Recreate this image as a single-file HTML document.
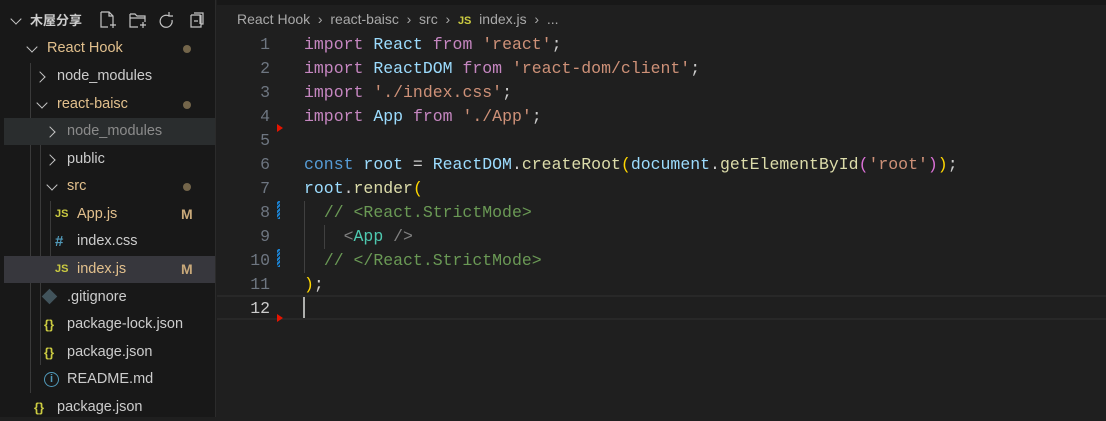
<!DOCTYPE html>
<html><head><meta charset="utf-8"><style>
*{margin:0;padding:0;box-sizing:border-box}
body{width:1106px;height:417px;background:#1f1f1f;overflow:hidden;position:relative;font-family:"Liberation Sans","Noto Sans CJK SC",sans-serif}
#side{position:absolute;left:0;top:0;width:216px;height:417px;background:#181818;border-right:1px solid #2b2b2b}
.row{position:absolute;left:0;width:215px;height:27px;font-size:14.5px;color:#cccccc;line-height:27px;white-space:nowrap}
.row span{position:absolute}
.chev{position:absolute;width:8px;height:8px;border-right:1.5px solid #c5c5c5;border-bottom:1.5px solid #c5c5c5}
.down{transform:rotate(45deg)}
.right{transform:rotate(-45deg)}
.dot{position:absolute;left:183px;top:10px;width:8px;height:8px;border-radius:50%;background:#73654a}
.js{font-family:"Liberation Sans",sans-serif;font-weight:bold;font-size:11px;color:#cbcb41;position:absolute}
.M{position:absolute;left:181px;color:#c9a97a;font-weight:bold;font-size:14px}
.guide{position:absolute;width:1px;background:#3a3a3a}
.ln{position:absolute;left:230px;width:40px;text-align:right;color:#6e7681;font-family:"Liberation Mono",monospace;font-size:16.5px;line-height:24px}
.cl{position:absolute;left:304px;line-height:24px;white-space:pre;color:#cccccc;font-family:"Liberation Mono",monospace;font-size:16.5px}
.k{color:#c586c0}.v{color:#9cdcfe}.s{color:#ce9178}.b{color:#569cd6}.f{color:#dcdcaa}.y{color:#ffd700}.p{color:#da70d6}.c{color:#6a9955}.t{color:#4ec9b0}.g{color:#808080}
.tri{position:absolute;left:277px;width:0;height:0;border-top:4px solid transparent;border-bottom:4px solid transparent;border-left:6px solid #e51400}
.mod{position:absolute;left:277px;width:3px;height:18px;background:repeating-linear-gradient(-45deg,#1b81d0 0 2px,#1f1f1f 2px 3px)}
</style></head><body>
<div style="position:absolute;left:217px;top:0;width:889px;height:5px;background:#181818"></div>
<div id="side">
 <div class="row" style="top:7px;font-weight:bold;font-size:13px"><i class="chev down" style="left:12px;top:8px"></i><span style="left:30px">木屋分享</span>
  <svg style="position:absolute;left:100px;top:4px" width="110" height="18" fill="none" stroke="#c5c5c5" stroke-width="1.2">
   <path d="M1 1h8l4 4v6M1 1v15h7M13 5h-4V1M10 14h6M13 11v6"/>
   <path d="M30 3h5l2 2h8v6M30 3v13h8M40 14h6M43 11v6M30 7h15"/>
   <path d="M69 5a6 6 0 1 0 3 4M69 1v4h4" />
   <path d="M91 4h9v9M94 2h9v11h-2M91 4v12h10V4M94 10h4"/>
  </svg></div>
 <div class="row" style="top:35px;color:#e2c08d"><i class="chev down" style="left:28px;top:8px"></i><span style="left:47px">React Hook</span><i class="dot"></i></div>
 <div class="guide" style="left:30px;top:63px;height:330px"></div>
 <div class="row" style="top:63px"><i class="chev right" style="left:36px;top:10px"></i><span style="left:57px">node_modules</span></div>
 <div class="row" style="top:91px;color:#e2c08d"><i class="chev down" style="left:38px;top:8px"></i><span style="left:57px">react-baisc</span><i class="dot"></i></div>
 <div class="guide" style="left:40px;top:118px;height:247px"></div>
 <div class="row" style="top:118px;background:#2a2d2e;left:4px;width:211px;color:#8b8b8b"><i class="chev right" style="left:42px;top:10px"></i><span style="left:63px">node_modules</span></div>
 <div class="row" style="top:146px"><i class="chev right" style="left:46px;top:10px"></i><span style="left:67px">public</span></div>
 <div class="row" style="top:173px;color:#e2c08d"><i class="chev down" style="left:48px;top:8px"></i><span style="left:67px">src</span><i class="dot"></i></div>
 <div class="guide" style="left:50px;top:201px;height:81px"></div>
 <div class="row" style="top:201px;color:#e2c08d"><b class="js" style="left:55px">JS</b><span style="left:77px">App.js</span><b class="M">M</b></div>
 <div class="row" style="top:228px"><b style="position:absolute;left:55px;color:#519aba;font-size:15px">#</b><span style="left:77px">index.css</span></div>
 <div class="row" style="top:256px;background:#37373d;left:4px;width:211px;color:#e2c08d"><b class="js" style="left:51px">JS</b><span style="left:73px">index.js</span><b class="M" style="left:177px">M</b></div>
 <div class="row" style="top:284px"><span style="left:44px;top:7px;width:11px;height:11px;background:#41535b;transform:rotate(45deg)"></span><span style="left:67px">.gitignore</span></div>
 <div class="row" style="top:311px"><b style="position:absolute;left:44px;color:#cbcb41;font-size:13px">{}</b><span style="left:67px">package-lock.json</span></div>
 <div class="row" style="top:339px"><b style="position:absolute;left:44px;color:#cbcb41;font-size:13px">{}</b><span style="left:67px">package.json</span></div>
 <div class="row" style="top:366px"><span style="left:44px;top:6px;width:15px;height:15px;border:1.5px solid #519aba;border-radius:50%;color:#519aba;font-size:11px;line-height:12px;text-align:center;font-weight:bold">i</span><span style="left:67px">README.md</span></div>
 <div class="row" style="top:394px"><b style="position:absolute;left:34px;color:#cbcb41;font-size:13px">{}</b><span style="left:57px">package.json</span></div>
</div>
<div style="position:absolute;left:237px;top:11px;font-size:14px;color:#a9a9a9;white-space:nowrap">React Hook &nbsp;›&nbsp; react-baisc &nbsp;›&nbsp; src &nbsp;› &nbsp;<b style="color:#cbcb41;font-size:11px">JS</b>&nbsp; index.js &nbsp;›&nbsp; ...</div>
<div style="position:absolute;left:217px;top:295px;width:889px;height:25px;border-top:2px solid #282828;border-bottom:2px solid #282828"></div>
<div style="position:absolute;left:303px;top:297px;width:2px;height:21px;background:#aeafad"></div>
<div class="guide" style="left:304px;top:201px;height:72px;background:#404040"></div>
<div class="guide" style="left:324px;top:225px;height:24px;background:#404040"></div>
<div class="mod" style="top:201px"></div><div class="mod" style="top:249px"></div>
<div class="ln" style="top:33px">1<br>2<br>3<br>4<br>5<br>6<br>7<br>8<br>9<br>10<br>11<br><span style="color:#ccc">12</span></div>
<div class="tri" style="top:124px"></div><div class="tri" style="top:314px"></div>
<div class="cl" style="top:33px"><span class="k">import</span> <span class="v">React</span> <span class="k">from</span> <span class="s">'react'</span>;
<span class="k">import</span> <span class="v">ReactDOM</span> <span class="k">from</span> <span class="s">'react-dom/client'</span>;
<span class="k">import</span> <span class="s">'./index.css'</span>;
<span class="k">import</span> <span class="v">App</span> <span class="k">from</span> <span class="s">'./App'</span>;

<span class="b">const</span> <span class="v">root</span> = <span class="v">ReactDOM</span>.<span class="f">createRoot</span><span class="y">(</span><span class="v">document</span>.<span class="f">getElementById</span><span class="p">(</span><span class="s">'root'</span><span class="p">)</span><span class="y">)</span>;
<span class="v">root</span>.<span class="f">render</span><span class="y">(</span>
  <span class="c">// &lt;React.StrictMode&gt;</span>
    <span class="g">&lt;</span><span class="t">App</span> <span class="g">/&gt;</span>
  <span class="c">// &lt;/React.StrictMode&gt;</span>
<span class="y">)</span>;
</div>
</body></html>
